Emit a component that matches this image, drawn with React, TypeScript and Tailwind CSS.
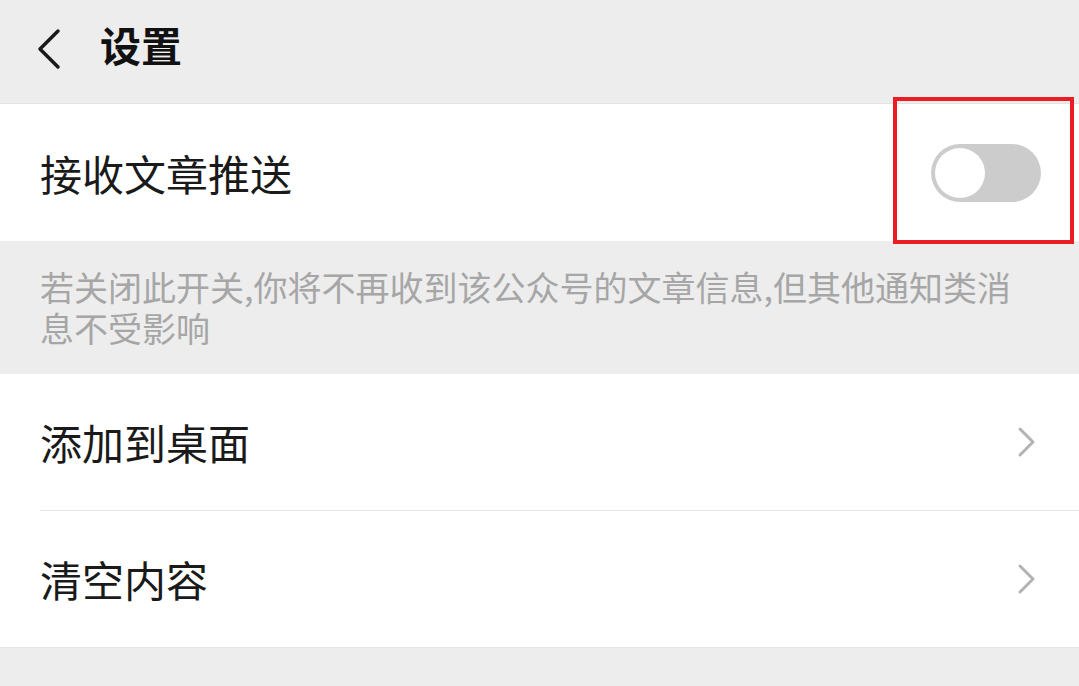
import React from "react";

const font = { fontFamily: '"Noto Sans CJK SC", "Noto Sans", sans-serif' };

function Chevron() {
  return (
    <svg width="20" height="32" viewBox="0 0 20 32" fill="none">
      <path d="M3 3 L16 16 L3 29" stroke="#b3b3b3" strokeWidth="3" strokeLinecap="round" strokeLinejoin="round" />
    </svg>
  );
}

export default function App() {
  return (
    <div className="w-[1079px] h-[686px] bg-[#ededed] flex flex-col overflow-hidden" style={font}>
      <div className="h-[103px] flex items-center shrink-0">
        <div className="w-[100px] flex items-center pl-[36px] -mt-[6px]">
          <svg width="26" height="42" viewBox="0 0 26 42" fill="none">
            <path d="M22 3 L4 21 L22 39" stroke="#1a1a1a" strokeWidth="3.5" strokeLinecap="round" strokeLinejoin="round" />
          </svg>
        </div>
        <div className="text-[41px] font-bold text-[#111] leading-none -mt-[14px]">设置</div>
      </div>
      <div className="h-px bg-[#e3e3e3]" />
      <div className="h-[137px] bg-white flex items-center justify-between pl-[40px] pr-[38px] shrink-0 relative">
        <div className="text-[42px] text-[#1a1a1a] leading-none">接收文章推送</div>
        <div className="w-[110px] h-[58px] rounded-full bg-[#cccccc] p-[4px]">
          <div className="w-[50px] h-[50px] rounded-full bg-white" />
        </div>
        <div className="absolute left-[893px] top-[-7px] w-[181px] h-[147px] border-[4px] border-[#ea1c24]" />
      </div>
      <div className="h-[133px] pl-[40px] pr-[50px] pt-[25px] shrink-0">
        <p className="text-[34px] leading-[41px] text-[#a6a6a6]">
          若关闭此开关,你将不再收到该公众号的文章信息,但其他通知类消息不受影响
        </p>
      </div>
      <div className="bg-white shrink-0">
        <div className="h-[136px] flex items-center justify-between pl-[40px] pr-[42px]">
          <div className="text-[42px] text-[#1a1a1a] leading-none">添加到桌面</div>
          <Chevron />
        </div>
        <div className="ml-[40px] h-px bg-[#e6e6e6]" />
        <div className="h-[136px] flex items-center justify-between pl-[40px] pr-[42px]">
          <div className="text-[42px] text-[#1a1a1a] leading-none">清空内容</div>
          <Chevron />
        </div>
      </div>
      <div className="h-px bg-[#e6e6e6]" />
    </div>
  );
}
